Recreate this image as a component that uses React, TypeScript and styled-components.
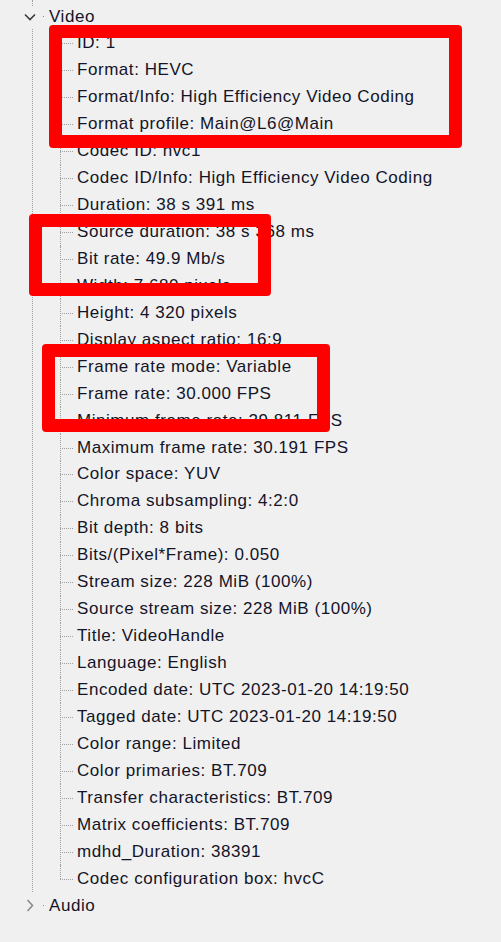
import styled, { createGlobalStyle } from 'styled-components';

const GlobalStyle = createGlobalStyle`
  html, body {
    margin: 0;
    padding: 0;
    background: #f0f0f0;
  }
`;

const Page = styled.div`
  position: relative;
  width: 501px;
  height: 942px;
  overflow: hidden;
  background: #f0f0f0;
  font-family: 'Liberation Sans', Arial, sans-serif;
  font-size: 17px;
  letter-spacing: 0.55px;
  color: #141428;
`;

const NodeBody = styled.div<{ $line?: boolean }>`
  margin-left: 32px;
  border-left: 1px dotted ${(p) => (p.$line ? '#a0a0a0' : 'transparent')};
  padding-top: ${(p) => (p.$line ? 3 : 0)}px;
`;

const HeaderRow = styled.div`
  display: flex;
  align-items: center;
  height: 27px;
  margin-left: -10px;
`;

const Expander = styled.span`
  display: flex;
  align-items: center;
  justify-content: center;
  width: 14px;
  height: 22px;
  background: #f0f0f0;
`;

const Dot = styled.span`
  width: 1px;
  height: 1px;
  background: #8a8a8a;
  margin: 0 5px 0 6px;
`;

const Label = styled.span`
  white-space: nowrap;
  line-height: 27px;
`;

const ChildList = styled.div`
  margin-left: 27px;
`;

const ChildRow = styled.div`
  position: relative;
  height: 26.94px;
  display: flex;
  align-items: center;
  padding-left: 17px;
  white-space: nowrap;

  &::before {
    content: '';
    position: absolute;
    left: 0;
    top: 50%;
    width: 13px;
    border-top: 1px dotted #a0a0a0;
  }

  &::after {
    content: '';
    position: absolute;
    left: 0;
    top: 0;
    height: 100%;
    border-left: 1px dotted #a0a0a0;
  }

  &:last-child::after {
    height: 50%;
  }
`;

const Highlight = styled.div<{ $x: number; $y: number; $w: number; $h: number }>`
  position: absolute;
  left: ${(p) => p.$x}px;
  top: ${(p) => p.$y}px;
  width: ${(p) => p.$w}px;
  height: ${(p) => p.$h}px;
  box-sizing: border-box;
  border: 13px solid #ff0000;
  border-radius: 4px;
  pointer-events: none;
`;

const fields = [
  'ID: 1',
  'Format: HEVC',
  'Format/Info: High Efficiency Video Coding',
  'Format profile: Main@L6@Main',
  'Codec ID: hvc1',
  'Codec ID/Info: High Efficiency Video Coding',
  'Duration: 38 s 391 ms',
  'Source duration: 38 s 368 ms',
  'Bit rate: 49.9 Mb/s',
  'Width: 7 680 pixels',
  'Height: 4 320 pixels',
  'Display aspect ratio: 16:9',
  'Frame rate mode: Variable',
  'Frame rate: 30.000 FPS',
  'Minimum frame rate: 29.811 FPS',
  'Maximum frame rate: 30.191 FPS',
  'Color space: YUV',
  'Chroma subsampling: 4:2:0',
  'Bit depth: 8 bits',
  'Bits/(Pixel*Frame): 0.050',
  'Stream size: 228 MiB (100%)',
  'Source stream size: 228 MiB (100%)',
  'Title: VideoHandle',
  'Language: English',
  'Encoded date: UTC 2023-01-20 14:19:50',
  'Tagged date: UTC 2023-01-20 14:19:50',
  'Color range: Limited',
  'Color primaries: BT.709',
  'Transfer characteristics: BT.709',
  'Matrix coefficients: BT.709',
  'mdhd_Duration: 38391',
  'Codec configuration box: hvcC',
];

function ChevronDown() {
  return (
    <svg width='12' height='8' viewBox='0 0 12 8'>
      <path d='M1 1.5 L6 6.5 L11 1.5' fill='none' stroke='#3c3c3c' strokeWidth='1.6' />
    </svg>
  );
}

function ChevronRight() {
  return (
    <svg width='8' height='13' viewBox='0 0 8 13'>
      <path d='M1.5 1 L6.5 6.5 L1.5 12' fill='none' stroke='#8c8c8c' strokeWidth='1.6' />
    </svg>
  );
}

export default function App() {
  return (
    <Page>
      <GlobalStyle />
      <NodeBody $line>
        <HeaderRow>
          <Expander>
            <ChevronDown />
          </Expander>
          <Dot />
          <Label>Video</Label>
        </HeaderRow>
        <ChildList>
          {fields.map((f) => (
            <ChildRow key={f}>{f}</ChildRow>
          ))}
        </ChildList>
      </NodeBody>
      <NodeBody>
        <HeaderRow>
          <Expander>
            <ChevronRight />
          </Expander>
          <Dot />
          <Label>Audio</Label>
        </HeaderRow>
      </NodeBody>

      <Highlight $x={49} $y={25} $w={413} $h={123} />
      <Highlight $x={29} $y={214} $w={242} $h={82} />
      <Highlight $x={42} $y={344} $w={288} $h={88} />
    </Page>
  );
}
